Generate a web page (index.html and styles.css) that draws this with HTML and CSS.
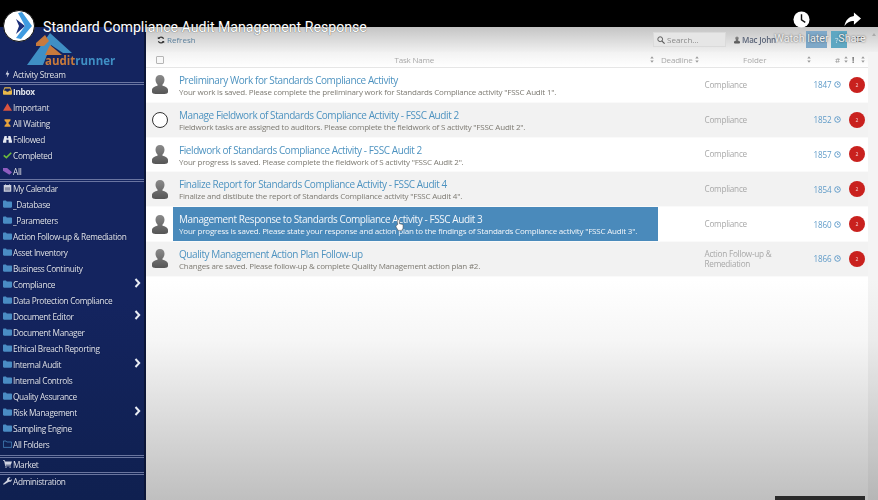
FILE: index.html
```html
<!DOCTYPE html>
<html lang="en">
<head>
<meta charset="utf-8">
<title>Standard Compliance Audit Management Response</title>
<link rel="stylesheet" href="styles.css">
</head>
<body>
<svg class="defs" width="0" height="0" aria-hidden="true">
  <defs>
    <linearGradient id="bust" x1="0" y1="0" x2="0" y2="1"><stop offset="0" stop-color="#8a8a8a"/><stop offset="1" stop-color="#565656"/></linearGradient>
  </defs>
  <symbol id="folder" viewBox="0 0 12 10"><path d="M0 1.500C0 .7.6.2 1.300.2h2.600l1.200 1.300h5.500c.8 0 1.400.5 1.400 1.200v6c0 .7-.6 1.200-1.400 1.200H1.300C.6 9.900 0 9.400 0 8.700z" fill="#4a8cc4"/></symbol>
  <symbol id="chev" viewBox="0 0 7 10"><path d="M1.500 1l3.700 4-3.700 4" fill="none" stroke="#e8ecf4" stroke-width="2"/></symbol>
  <symbol id="sort" viewBox="0 0 6 10"><path d="M3 0l2.600 3.600H.4zM3 10L.4 6.400h5.200z" fill="#9a9a9a"/></symbol>
  <symbol id="user" viewBox="0 0 16 19"><path d="M8 0c2.800 0 4.500 2 4.500 4.800 0 2.200-1 3.800-2 4.800v1.200c2.600.7 5.500 1.800 5.500 4.200v2c0 1.200-1.500 2-3.500 2h-9c-2 0-3.500-.8-3.500-2v-2c0-2.400 2.900-3.500 5.500-4.200V9.600c-1-1-2-2.600-2-4.800C3.500 2 5.200 0 8 0z" fill="url(#bust)"/></symbol>
  <symbol id="clock" viewBox="0 0 10 10"><circle cx="5" cy="5" r="4" fill="none" stroke="#4f90c4" stroke-width="1.200"/><path d="M5 2.800V5h2" fill="none" stroke="#4f90c4"/></symbol>
</svg>

<div class="screen">
  <aside class="sidebar">
    <div class="logo">
      <svg class="logo-mark" viewBox="0 0 46 32" aria-hidden="true">
        <path d="M0 32H16L24 12 36 20H45L23 0z" fill="#3f8fc4"/>
        <path d="M9 10L18 2 22 8 17 13H9z" fill="#c77a3c"/>
        <path d="M18 22L23 12 35 22z" fill="#c77a3c"/>
      </svg>
      <div class="logo-text"><span class="logo-a">audit</span><span class="logo-b">runner</span></div>
    </div>
    <div class="nav-item"><svg class="ic" viewBox="0 0 12 10"><path d="M6.500 0L3.500 5.500H6L5 10 8.500 4H6z" fill="#e6e9f2"/></svg>Activity Stream</div>
    <div class="sep"></div>
    <div class="nav-item strong"><svg class="ic" viewBox="0 0 12 10"><path d="M2 0h8l2 5v4c0 .6-.4 1-1 1H1c-.6 0-1-.4-1-1V5z" fill="#e8b84a"/><path d="M2.500 1.500h7l1 3H8L7 6H5L4 4.500H1.500z" fill="#14235c"/></svg>Inbox</div>
    <div class="nav-item"><svg class="ic" viewBox="0 0 12 10"><path d="M6 0l6 10H0z" fill="#d9533f"/></svg>Important</div>
    <div class="nav-item"><svg class="ic" viewBox="0 0 12 10"><path d="M2 0h8v1.500L7 5l3 3.500V10H2V8.500L5 5 2 1.500z" fill="#e8a33d"/></svg>All Waiting</div>
    <div class="nav-item"><svg class="ic" viewBox="0 0 12 10"><path d="M2 1h3v3h2V1h3l2 7v2H7.500V6h-3v4H0V8z" fill="#e6e9f2"/></svg>Followed</div>
    <div class="nav-item"><svg class="ic" viewBox="0 0 12 10"><path d="M1 5.500l3.500 3L11 2" fill="none" stroke="#6dbb3c" stroke-width="2.200"/></svg>Completed</div>
    <div class="nav-item"><svg class="ic" viewBox="0 0 12 10"><path d="M0 1h5.500L12 6.500 8.500 10 0 4.500z" fill="#8f5cc0"/></svg>All</div>
    <div class="sep"></div>
    <div class="nav-item"><svg class="ic" viewBox="0 0 12 10"><path d="M1 1h2V0h1v1h4V0h1v1h2v9H1z" fill="#cfd3e0"/><path d="M2.500 4h7v4.500h-7z" fill="#8b90a8"/></svg>My Calendar</div>
    <div class="nav-item"><svg class="ic"><use href="#folder"/></svg>_Database</div>
    <div class="nav-item"><svg class="ic"><use href="#folder"/></svg>_Parameters</div>
    <div class="nav-item"><svg class="ic"><use href="#folder"/></svg>Action Follow-up &amp; Remediation</div>
    <div class="nav-item"><svg class="ic"><use href="#folder"/></svg>Asset Inventory</div>
    <div class="nav-item"><svg class="ic"><use href="#folder"/></svg>Business Continuity</div>
    <div class="nav-item"><svg class="ic"><use href="#folder"/></svg>Compliance<svg class="chev"><use href="#chev"/></svg></div>
    <div class="nav-item"><svg class="ic"><use href="#folder"/></svg>Data Protection Compliance</div>
    <div class="nav-item"><svg class="ic"><use href="#folder"/></svg>Document Editor<svg class="chev"><use href="#chev"/></svg></div>
    <div class="nav-item"><svg class="ic"><use href="#folder"/></svg>Document Manager</div>
    <div class="nav-item"><svg class="ic"><use href="#folder"/></svg>Ethical Breach Reporting</div>
    <div class="nav-item"><svg class="ic"><use href="#folder"/></svg>Internal Audit<svg class="chev"><use href="#chev"/></svg></div>
    <div class="nav-item"><svg class="ic"><use href="#folder"/></svg>Internal Controls</div>
    <div class="nav-item"><svg class="ic"><use href="#folder"/></svg>Quality Assurance</div>
    <div class="nav-item"><svg class="ic"><use href="#folder"/></svg>Risk Management<svg class="chev"><use href="#chev"/></svg></div>
    <div class="nav-item"><svg class="ic"><use href="#folder"/></svg>Sampling Engine</div>
    <div class="nav-item"><svg class="ic" viewBox="0 0 12 10"><path d="M.5 1h3.500l1 1.300h6.500v7.200H.5z" fill="none" stroke="#4a8cc4"/></svg>All Folders</div>
    <div class="sep sep-market"></div>
    <div class="nav-item"><svg class="ic" viewBox="0 0 12 10"><path d="M0 0h2.500l.5 1.500h9L10.500 6H3.500l.3 1H10.500v1H3L1.500 1H0z" fill="#cfd3e0"/><circle cx="4" cy="9.200" r=".9" fill="#cfd3e0"/><circle cx="9.500" cy="9.200" r=".9" fill="#cfd3e0"/></svg>Market</div>
    <div class="sep"></div>
    <div class="nav-item"><svg class="ic" viewBox="0 0 12 10"><path d="M1 10L0 9l5.500-5C5 2 6.500 0 9 0l1 .3L8 2l.5 1.500L10 4l1.700-1.700c.4 2-1.200 4-3.700 3.700z" fill="#cfd3e0"/></svg>Administration</div>
  </aside>

  <main class="main">
    <div class="toolbar">
      <div class="refresh"><svg class="refresh-ic" viewBox="0 0 10 10"><path d="M8.300 3.500A3.600 3.600 0 0 0 2 3M1.700 6.500A3.600 3.600 0 0 0 8 7" fill="none" stroke="#333" stroke-width="1.500"/><path d="M1 .8v3h3zM9 9.200v-3H6z" fill="#333"/></svg>Refresh</div>
      <div class="tools">
        <div class="search"><svg class="search-ic" viewBox="0 0 10 10"><circle cx="4" cy="4" r="3" fill="none" stroke="#555" stroke-width="1.200"/><path d="M6.300 6.300L9.500 9.500" stroke="#555" stroke-width="1.400"/></svg>Search...</div>
        <div class="account"><svg class="acct-ic"><use href="#user"/></svg>Mac John</div>
        <div class="btn btn-a"></div>
        <div class="btn btn-b">?</div>
        <div class="menu-ic"></div>
        <div class="caret"></div>
      </div>
    </div>
    <div class="content">
      <div class="list">
        <div class="thead">
          <div class="c-avatar"><span class="check"></span></div>
          <div class="c-task">Task Name<svg class="sort"><use href="#sort"/></svg></div>
          <div class="c-dead">Deadline<svg class="sort"><use href="#sort"/></svg></div>
          <div class="c-folder">Folder<svg class="sort"><use href="#sort"/></svg></div>
          <div class="c-num">#<svg class="sort"><use href="#sort"/></svg></div>
          <div class="c-pri">!<svg class="sort"><use href="#sort"/></svg></div>
        </div>

        <div class="row">
          <div class="c-avatar"><svg class="avatar"><use href="#user"/></svg></div>
          <div class="c-body"><div class="t-title">Preliminary Work for Standards Compliance Activity</div><div class="t-sub">Your work is saved. Please complete the preliminary work for Standards Compliance activity "FSSC Audit 1".</div></div>
          <div class="c-folder">Compliance</div>
          <div class="c-num">1847<svg class="clock"><use href="#clock"/></svg></div>
          <div class="c-pri"><span class="badge">2</span></div>
        </div>
        <div class="row alt">
          <div class="c-avatar"><span class="ring"></span></div>
          <div class="c-body"><div class="t-title">Manage Fieldwork of Standards Compliance Activity - FSSC Audit 2</div><div class="t-sub">Fieldwork tasks are assigned to auditors. Please complete the fieldwork of S activity "FSSC Audit 2".</div></div>
          <div class="c-folder">Compliance</div>
          <div class="c-num">1852<svg class="clock"><use href="#clock"/></svg></div>
          <div class="c-pri"><span class="badge">2</span></div>
        </div>
        <div class="row">
          <div class="c-avatar"><svg class="avatar"><use href="#user"/></svg></div>
          <div class="c-body"><div class="t-title">Fieldwork of Standards Compliance Activity - FSSC Audit 2</div><div class="t-sub">Your progress is saved. Please complete the fieldwork of S activity "FSSC Audit 2".</div></div>
          <div class="c-folder">Compliance</div>
          <div class="c-num">1857<svg class="clock"><use href="#clock"/></svg></div>
          <div class="c-pri"><span class="badge">2</span></div>
        </div>
        <div class="row alt">
          <div class="c-avatar"><svg class="avatar"><use href="#user"/></svg></div>
          <div class="c-body"><div class="t-title">Finalize Report for Standards Compliance Activity - FSSC Audit 4</div><div class="t-sub">Finalize and distibute the report of Standards Compliance activity "FSSC Audit 4".</div></div>
          <div class="c-folder">Compliance</div>
          <div class="c-num">1854<svg class="clock"><use href="#clock"/></svg></div>
          <div class="c-pri"><span class="badge">2</span></div>
        </div>
        <div class="row">
          <div class="c-avatar"><svg class="avatar"><use href="#user"/></svg></div>
          <div class="c-body selected"><div class="t-title">Management Response to Standards Compliance Activity - FSSC Audit 3</div><div class="t-sub">Your progress is saved. Please state your response and action plan to the findings of Standards Compliance activity "FSSC Audit 3".</div>
            <svg class="cursor" viewBox="0 0 10 13"><path d="M3 6V1.500a1 1 0 0 1 2 0V5l4 1v4l-1.500 2.500h-4L1 8.500 1.500 7z" fill="#fff" stroke="#444" stroke-width=".6"/></svg>
          </div>
          <div class="c-folder">Compliance</div>
          <div class="c-num">1860<svg class="clock"><use href="#clock"/></svg></div>
          <div class="c-pri"><span class="badge">2</span></div>
        </div>
        <div class="row alt">
          <div class="c-avatar"><svg class="avatar"><use href="#user"/></svg></div>
          <div class="c-body"><div class="t-title">Quality Management Action Plan Follow-up</div><div class="t-sub">Changes are saved. Please follow-up &amp; complete Quality Management action plan #2.</div></div>
          <div class="c-folder">Action Follow-up &amp; Remediation</div>
          <div class="c-num">1866<svg class="clock"><use href="#clock"/></svg></div>
          <div class="c-pri"><span class="badge">2</span></div>
        </div>
      </div>
      <div class="scrollbar"></div>
    </div>
  </main>

  <div class="yt-bar">
    <svg class="yt-logo" viewBox="0 0 32 32" aria-hidden="true">
      <circle cx="16" cy="16" r="15.500" fill="#fff" stroke="#111" stroke-width="1"/>
      <path d="M15 3l4-1 10 14-11 13-5-1 9-12z" fill="#3f9be0"/>
      <path d="M13 9l9 7-9 8 3-8z" fill="#1b2f7a"/>
    </svg>
    <div class="yt-title">Standard Compliance Audit Management Response</div>
    <div class="yt-action yt-later">
      <svg class="yt-ic" viewBox="0 0 18 18"><circle cx="9" cy="9" r="8.500" fill="#fff"/><path d="M9 3.500V9.500l4 2.500" fill="none" stroke="#111" stroke-width="1.500"/></svg>
      <span>Watch later</span>
    </div>
    <div class="yt-action yt-share">
      <svg class="yt-ic" viewBox="0 0 18 18"><path d="M10.500 1.500L18 8l-7.500 6.500v-4C6 10.500 3 12 .5 16 1.500 10 5 6 10.500 5.300z" fill="#fff"/></svg>
      <span>Share</span>
    </div>
  </div>
  <div class="yt-corner"></div>
</div>
</body>
</html>
```
FILE: styles.css
```css
* { box-sizing: border-box; }
html, body { margin: 0; height: 100%; background: #000; }
body { font-family: "Open Sans", "Noto Sans", sans-serif; overflow: hidden; }
.defs { position: absolute; }

.screen {
  position: relative;
  width: 878px;
  height: 500px;
  display: flex;
  overflow: hidden;
  background: #000;
}

/* sidebar */
.sidebar {
  width: 146px;
  flex: none;
  padding-top: 33px;
  background: linear-gradient(#14245f, #14245f 60%, #0f2050);
  border-right: 2px solid #0c1638;
  color: #dfe3ee;
  font-size: 8.300px;
  letter-spacing: -.34px;
  filter: blur(.3px);
}
.logo { height: 33px; position: relative; }
.logo-mark { position: absolute; left: 27px; top: 0; width: 46px; height: 32px; }
.logo-text {
  position: absolute;
  left: 45px;
  top: 21px;
  font: 700 11.500px/13px "Open Sans", sans-serif;
  letter-spacing: 0;
}
.logo-a { color: #c77a3c; }
.logo-b { color: #3f8fc4; }
.nav-item {
  height: 16px;
  display: flex;
  align-items: center;
  padding-left: 3px;
  position: relative;
  white-space: nowrap;
  text-shadow: 0 0 1px #0a1236;
}
.strong { font-weight: 700; }
.ic { width: 9px; height: 8px; margin-right: 1px; flex: none; }
.chev { position: absolute; right: 3px; top: 2px; width: 7px; height: 10px; }
.sep {
  height: 3px;
  margin-bottom: -2px;
  border-top: 1px solid #8791b8;
  border-bottom: 1px solid #8791b8;
  opacity: .75;
}
.sep-market { margin-top: 3px; }

/* main */
.main {
  flex: 1;
  min-width: 0;
  padding-top: 27px;
  display: flex;
  flex-direction: column;
  background: linear-gradient(#fff 280px, #f6f6f6 340px, #bfbfbf 500px);
  filter: blur(.35px);
}
.toolbar {
  height: 25px;
  flex: none;
  display: flex;
  align-items: center;
  justify-content: space-between;
  padding: 0 2px 0 11px;
  background: linear-gradient(#c4c4c4, #f0f0f0);
  font-size: 8px;
  color: #5b7f9b;
}
.refresh { display: flex; align-items: center; gap: 2px; }
.refresh-ic { width: 8px; height: 8px; }
.tools { display: flex; align-items: center; }
.search {
  width: 73px;
  height: 15px;
  display: flex;
  align-items: center;
  gap: 2px;
  padding-left: 3px;
  color: #8a8a8a;
  background: #e6e6e6;
  border: 1px solid #dadada;
}
.search-ic { width: 8px; height: 8px; }
.account {
  width: 80px;
  padding-left: 8px;
  display: flex;
  align-items: center;
  gap: 2px;
  color: #5a6478;
  font-weight: 600;
  letter-spacing: -.2px;
}
.acct-ic { width: 6px; height: 8px; flex: none; }
.btn { height: 17px; color: #d8e8f0; line-height: 17px; }
.btn-a { width: 21px; margin-right: 4px; background: #7ea8c8; }
.btn-b { width: 16px; padding-left: 4px; background: #5ea7c2; }
.menu-ic {
  width: 7px;
  height: 5px;
  margin-left: 9px;
  border-top: 1px solid #666;
  border-bottom: 1px solid #888;
}
.caret {
  width: 0;
  height: 0;
  margin: -11px 0 0 9px;
  border-left: 2.500px solid transparent;
  border-right: 2.500px solid transparent;
  border-bottom: 3px solid #aaa;
}

.content { flex: 1; display: flex; min-height: 0; }
.list { width: 722px; flex: none; }
.scrollbar { flex: 1; background: rgba(0, 0, 0, .045); }
.thead {
  height: 16px;
  display: flex;
  align-items: center;
  background: linear-gradient(#f2f2f2, #fff);
  border-bottom: 1px solid #e6e6e6;
  color: #a8a8a8;
  font-size: 8px;
  letter-spacing: -.2px;
}
.row {
  height: 34.800px;
  display: flex;
  align-items: center;
  background: #fff;
  border-bottom: 1px solid #fafafa;
}
.alt { background: #f2f2f2; }
.c-avatar { width: 27px; flex: none; display: flex; justify-content: center; }
.check { width: 8px; height: 8px; border: 1px solid #b5b5b5; background: #f8f8f8; border-radius: 1px; }
.c-task {
  width: 484px;
  flex: none;
  display: flex;
  align-items: center;
  justify-content: flex-end;
  gap: 216px;
  padding-right: 3px;
}
.c-dead { width: 48px; flex: none; display: flex; gap: 3px; padding-left: 4px; align-items: center; }
.c-body {
  width: 484.500px;
  flex: none;
  align-self: stretch;
  padding: 6px 0 0 6px;
  position: relative;
}
.t-title { font-size: 10px; letter-spacing: -.42px; line-height: 12px; color: #4e93c0; white-space: nowrap; }
.t-sub { font-size: 8px; letter-spacing: -.2px; line-height: 11px; color: #7d7a72; white-space: nowrap; }
.selected { background: #4a8abb; }
.selected .t-title, .selected .t-sub { color: #f2f6fa; }
.cursor { position: absolute; left: 222px; top: 12px; width: 9px; height: 12px; }
.avatar { width: 16px; height: 19px; }
.ring { width: 16px; height: 16px; border: 1.500px solid #333; border-radius: 50%; background: #fff; }
.c-folder {
  flex: none;
  width: 154px;
  padding: 0 32px 0 47px;
  font-size: 8.200px;
  letter-spacing: -.25px;
  line-height: 10px;
  color: #a8a8a8;
}
.thead .c-folder {
  width: 118px;
  padding: 0 0 0 38px;
  display: flex;
  align-items: center;
  gap: 40px;
  font-size: 8px;
  letter-spacing: 0;
}
.c-num {
  width: 29px;
  flex: none;
  display: flex;
  align-items: center;
  justify-content: flex-end;
  gap: 2px;
  color: #5f9bc8;
  font-size: 8.100px;
  letter-spacing: -.1px;
}
.thead .c-num { color: #999; width: 25px; gap: 4px; font-size: 8px; }
.clock { width: 7px; height: 7px; flex: none; }
.c-pri { flex: 1; display: flex; justify-content: flex-end; padding-right: 3px; }
.thead .c-pri { gap: 7px; padding-right: 3px; align-items: center; font-weight: 700; color: #666; }
.badge {
  width: 16px;
  height: 16px;
  border-radius: 50%;
  background: #c9211e;
  color: #f4d8d8;
  font-size: 5px;
  line-height: 16px;
  text-align: center;
}
.sort { width: 4px; height: 7px; flex: none; }

/* video overlay */
.yt-bar {
  position: absolute;
  inset: 0 0 auto 0;
  height: 27px;
  background: #000;
  color: #fff;
}
.yt-logo { position: absolute; left: 3px; top: 10px; width: 32px; height: 32px; }
.yt-title {
  position: absolute;
  left: 43px;
  top: 18px;
  font: 400 14.130px/19px Roboto, sans-serif;
  white-space: nowrap;
  text-shadow: 0 0 1px #222;
}
.yt-action {
  position: absolute;
  top: 11px;
  display: flex;
  flex-direction: column;
  align-items: center;
  gap: 4px;
  font: 400 10.800px/14px Roboto, sans-serif;
  color: #efefef;
  white-space: nowrap;
  text-shadow: 0 0 2px rgba(0, 0, 0, .65);
}
.yt-later { left: 775px; width: 53px; }
.yt-share { left: 838px; width: 28px; }
.yt-ic { width: 17px; height: 17px; flex: none; }
.yt-corner {
  position: absolute;
  right: 13px;
  bottom: 0;
  width: 90px;
  height: 4px;
  background: #2a2a2a;
}
```
